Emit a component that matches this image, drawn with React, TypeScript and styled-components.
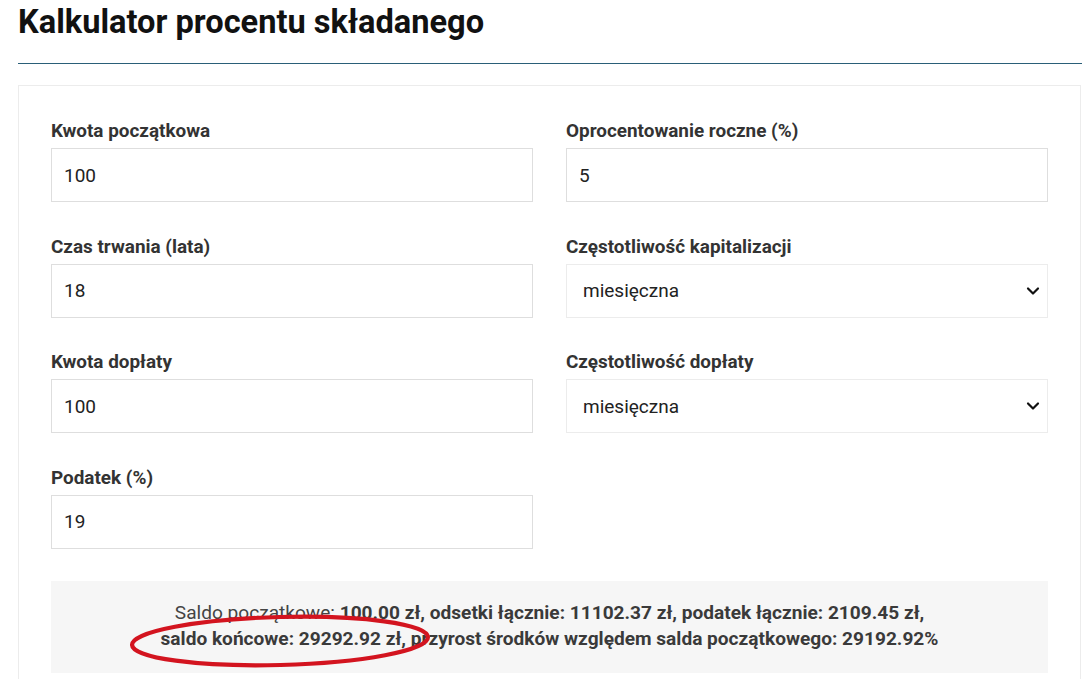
import React from "react";
import styled, { createGlobalStyle } from "styled-components";

const Global = createGlobalStyle`
  html, body { margin: 0; padding: 0; background: #fff; }
  body { font-family: Roboto, "Liberation Sans", Arial, sans-serif; color: #333; overflow: hidden; }
  * { box-sizing: border-box; }
`;

const Page = styled.div`
  padding: 0 0 0 18px;
  width: 1082px;
  height: 679px;
  overflow: hidden;
`;

const Title = styled.h1`
  margin: 0;
  padding-top: 2px;
  font-size: 32.6px;
  line-height: 40px;
  font-weight: 700;
  color: #111;
`;

const Rule = styled.hr`
  margin: 21px 0 0 0;
  border: none;
  border-top: 1px solid #2a5f78;
  height: 0;
`;

const Card = styled.div`
  margin-top: 21px;
  width: 1063px;
  border: 1px solid #ececec;
  border-bottom: none;
  padding: 34px 32px 40px 32px;
`;

const Grid = styled.div`
  display: grid;
  grid-template-columns: 482px 482px;
  column-gap: 33px;
  row-gap: 33.5px;
`;

const Field = styled.div`
  display: flex;
  flex-direction: column;
`;

const Label = styled.label`
  font-size: 18.9px;
  line-height: 21px;
  font-weight: 700;
  color: #333;
  margin-bottom: 7px;
`;

const Input = styled.input`
  height: 54px;
  width: 100%;
  border: 1px solid #dedede;
  padding: 0 12px;
  font-family: Roboto, "Liberation Sans", Arial, sans-serif;
  font-size: 19px;
  color: #222;
  background: #fff;
  outline: none;
`;

const SelectWrap = styled.div`
  position: relative;
  height: 54px;
`;

const Select = styled.select`
  appearance: none;
  -webkit-appearance: none;
  height: 54px;
  width: 100%;
  border: 1px solid #ececec;
  padding: 0 16px;
  font-family: Roboto, "Liberation Sans", Arial, sans-serif;
  font-size: 19px;
  color: #222;
  background: #fff;
  outline: none;
`;

const Chevron = styled.svg`
  position: absolute;
  right: 8px;
  top: 22px;
  pointer-events: none;
`;

const Result = styled.div`
  position: relative;
  margin-top: 32px;
  background: #f6f6f6;
  padding: 19px 10px 21px;
  text-align: center;
  font-size: 19.1px;
  line-height: 26px;
  color: #444;
`;

const B = styled.b`
  font-weight: 700;
  color: #3a3a3a;
`;

const Annotation = styled.svg`
  position: absolute;
  left: 76px;
  top: 31px;
  pointer-events: none;
`;

const ChevronIcon = () => (
  <Chevron width="14" height="10" viewBox="0 0 14 10">
    <path d="M2 2.5 L7 7.5 L12 2.5" fill="none" stroke="#111" strokeWidth="2.2" strokeLinecap="round" strokeLinejoin="round" />
  </Chevron>
);

const TextField = ({ label, value }: { label: string; value: string }) => (
  <Field>
    <Label>{label}</Label>
    <Input defaultValue={value} />
  </Field>
);

const SelectField = ({ label, value }: { label: string; value: string }) => (
  <Field>
    <Label>{label}</Label>
    <SelectWrap>
      <Select defaultValue={value}>
        <option value="roczna">roczna</option>
        <option value="kwartalna">kwartalna</option>
        <option value="miesięczna">miesięczna</option>
      </Select>
      <ChevronIcon />
    </SelectWrap>
  </Field>
);

export default function App() {
  return (
    <>
      <Global />
      <Page>
        <Title>Kalkulator procentu składanego</Title>
        <Rule />
        <Card>
          <Grid>
            <TextField label="Kwota początkowa" value="100" />
            <TextField label="Oprocentowanie roczne (%)" value="5" />
            <TextField label="Czas trwania (lata)" value="18" />
            <SelectField label="Częstotliwość kapitalizacji" value="miesięczna" />
            <TextField label="Kwota dopłaty" value="100" />
            <SelectField label="Częstotliwość dopłaty" value="miesięczna" />
            <TextField label="Podatek (%)" value="19" />
          </Grid>
          <Result>
            Saldo początkowe: <B>100.00 zł, odsetki łącznie: 11102.37 zł, podatek łącznie: 2109.45 zł,</B>
            <br />
            <B>saldo końcowe: 29292.92 zł, przyrost środków względem salda początkowego: 29192.92%</B>
            <Annotation width="306" height="58" viewBox="0 0 306 58">
              <ellipse cx="153" cy="29" rx="148" ry="24" fill="none" stroke="#d3141f" strokeWidth="4.2" transform="rotate(-1.5 153 29)" />
            </Annotation>
          </Result>
        </Card>
      </Page>
    </>
  );
}
